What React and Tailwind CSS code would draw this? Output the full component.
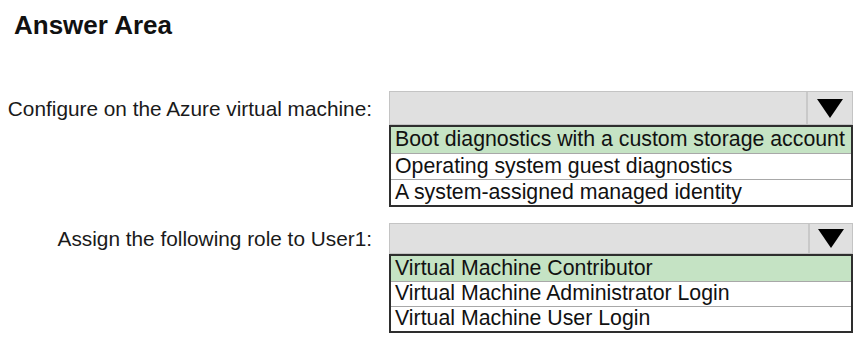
import React from "react";

function Arrow() {
  return (
    <svg width="26" height="19" viewBox="0 0 26 19">
      <polygon points="0,0 26,0 13,19" fill="#000" />
    </svg>
  );
}

function Dropdown({ headerH, rowH, options, arrowW }) {
  return (
    <div className="w-[464px]">
      <div
        className="flex border border-[#c4c4c4] bg-[#e0e0e0]"
        style={{ height: headerH }}
      >
        <div className="flex-1" />
        <div
          className="flex items-center justify-center border-l-2 border-[#c9c9c9]"
          style={{ width: arrowW }}
        >
          <Arrow />
        </div>
      </div>
      <div className="border-2 border-[#2e2e2e] bg-white">
        {options.map((o, i) => (
          <div
            key={o}
            className={
              "flex items-center whitespace-nowrap overflow-hidden pl-[4px] text-[21.3px] leading-none text-[#111] " +
              (i === 0 ? "bg-[#c5e3c4] " : "bg-white ") +
              (i > 0 ? "border-t border-[#a8a8a8]" : "")
            }
            style={{ height: rowH }}
          >
            {o}
          </div>
        ))}
      </div>
    </div>
  );
}

export default function App() {
  return (
    <div
      className="w-[863px] h-[343px] bg-white overflow-hidden"
      style={{ fontFamily: '"Liberation Sans", Arial, sans-serif' }}
    >
      <div className="pl-[14px] pt-[12px] text-[26px] font-bold leading-none text-[#111]">
        Answer Area
      </div>
      <div className="mt-[53px] flex flex-col gap-[16px]">
        <div className="flex items-start">
          <div className="w-[373px] h-[35px] flex items-center justify-end pr-[1px] text-[20.8px] text-[#1a1a1a] whitespace-nowrap">
            Configure on the Azure virtual machine:
          </div>
          <div className="ml-[16px]">
            <Dropdown
              headerH={34}
              rowH={26}
              arrowW={46}
              options={[
                "Boot diagnostics with a custom storage account",
                "Operating system guest diagnostics",
                "A system-assigned managed identity",
              ]}
            />
          </div>
        </div>
        <div className="flex items-start">
          <div className="w-[373px] h-[32px] flex items-center justify-end pr-[1px] text-[20.8px] text-[#1a1a1a] whitespace-nowrap">
            Assign the following role to User1:
          </div>
          <div className="ml-[16px]">
            <Dropdown
              headerH={31}
              rowH={25}
              arrowW={44}
              options={[
                "Virtual Machine Contributor",
                "Virtual Machine Administrator Login",
                "Virtual Machine User Login",
              ]}
            />
          </div>
        </div>
      </div>
    </div>
  );
}
